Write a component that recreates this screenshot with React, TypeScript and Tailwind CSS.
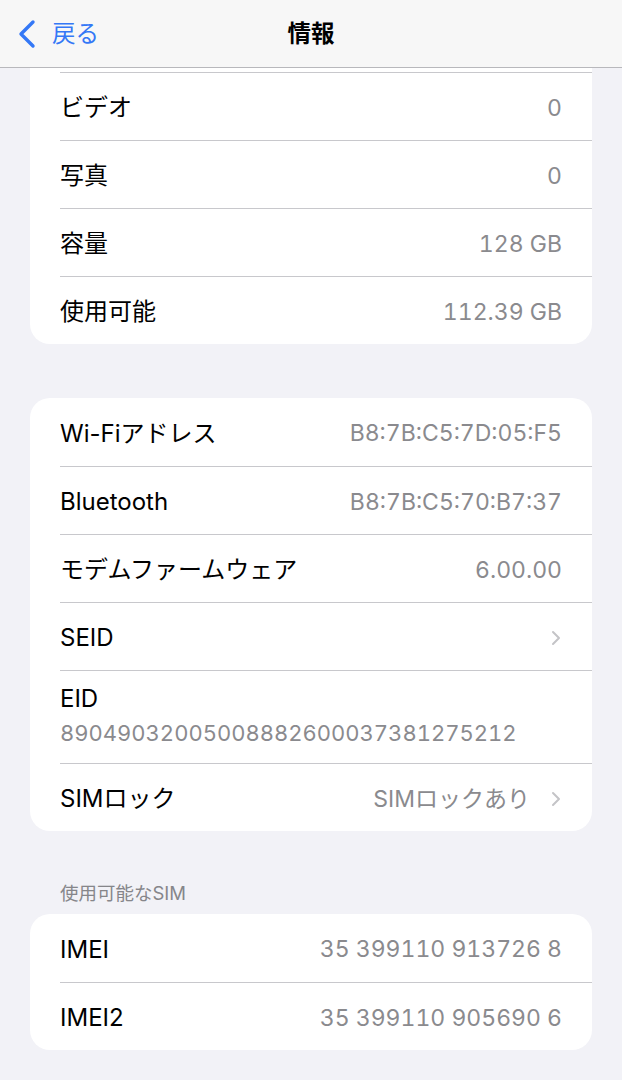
import { ChevronRight } from "lucide-react";

type Row = { label: string; value?: string; chevron?: boolean };

const font = {
  fontFamily: 'Inter, "Noto Sans CJK JP", sans-serif',
};

const storageRows: Row[] = [
  { label: "ビデオ", value: "0" },
  { label: "写真", value: "0" },
  { label: "容量", value: "128 GB" },
  { label: "使用可能", value: "112.39 GB" },
];

const networkRows: Row[] = [
  { label: "Wi-Fiアドレス", value: "B8:7B:C5:7D:05:F5" },
  { label: "Bluetooth", value: "B8:7B:C5:70:B7:37" },
  { label: "モデムファームウェア", value: "6.00.00" },
  { label: "SEID", chevron: true },
];

const simRows: Row[] = [
  { label: "IMEI", value: "35 399110 913726 8" },
  { label: "IMEI2", value: "35 399110 905690 6" },
];

const Chevron = () => (
  <ChevronRight
    className="w-[24px] h-[24px] text-[#c4c4c7] -mr-[6px]"
    strokeWidth={2}
  />
);

const SettingRow = ({ row, first }: { row: Row; first?: boolean }) => (
  <div className="pl-[30px]">
    <div
      className={`flex items-center justify-between h-[68px] pr-[30px] pt-[3px] ${
        first ? "" : "border-t border-[#c8c8cc]"
      }`}>
      <span className="text-[24px] text-black">{row.label}</span>
      <div className="flex items-center gap-[14px]">
        {row.value && (
          <span className="text-[23px] text-[#8a8a8e] tabular-nums">
            {row.value}
          </span>
        )}
        {row.chevron && <Chevron />}
      </div>
    </div>
  </div>
);

export default function App() {
  return (
    <div className="w-[622px] h-[1080px] bg-[#f2f2f7] overflow-hidden" style={font}>
      <header className="relative h-[68px] bg-[#f7f7f7] border-b border-[#b8b8bc] flex items-center">
        <div className="flex items-center pl-[16px] gap-[12px] text-[#3478f6]">
          <svg width="24" height="30" viewBox="0 0 24 30" fill="none">
            <path
              d="M17 3 L5 15 L17 27"
              stroke="currentColor"
              strokeWidth="3.4"
              strokeLinecap="round"
              strokeLinejoin="round"
            />
          </svg>
          <span className="text-[23.5px]">戻る</span>
        </div>
        <h1 className="absolute left-1/2 -translate-x-1/2 text-[23.5px] font-bold text-black">
          情報
        </h1>
      </header>

      <div className="px-[30px]">
        <div className="bg-white rounded-b-[20px] overflow-hidden">
          <div className="h-[4px]" />
          {storageRows.map((r) => (
            <SettingRow key={r.label} row={r} />
          ))}
        </div>

        <div className="bg-white rounded-[20px] mt-[54px] overflow-hidden">
          {networkRows.map((r, i) => (
            <SettingRow key={r.label} row={r} first={i === 0} />
          ))}
          <div className="pl-[30px]">
            <div className="border-t border-[#c8c8cc] pt-[11px] pb-[13px] pr-[30px]">
              <div className="text-[24px] leading-[34px] text-black">EID</div>
              <div className="text-[22px] leading-[34px] text-[#8a8a8e] tabular-nums">
                89049032005008882600037381275212
              </div>
            </div>
          </div>
          <div className="pl-[30px]">
            <div className="flex items-center justify-between h-[68px] pr-[30px] pt-[3px] border-t border-[#c8c8cc]">
              <span className="text-[24px] text-black">SIMロック</span>
              <div className="flex items-center gap-[14px]">
                <span className="text-[23px] text-[#8a8a8e]">SIMロックあり</span>
                <Chevron />
              </div>
            </div>
          </div>
        </div>

        <div className="mt-[50px] pl-[30px] text-[18.5px] text-[#86868a] leading-[24px]">
          使用可能なSIM
        </div>

        <div className="bg-white rounded-[20px] mt-[9px] overflow-hidden">
          {simRows.map((r, i) => (
            <SettingRow key={r.label} row={r} first={i === 0} />
          ))}
        </div>
      </div>
    </div>
  );
}
